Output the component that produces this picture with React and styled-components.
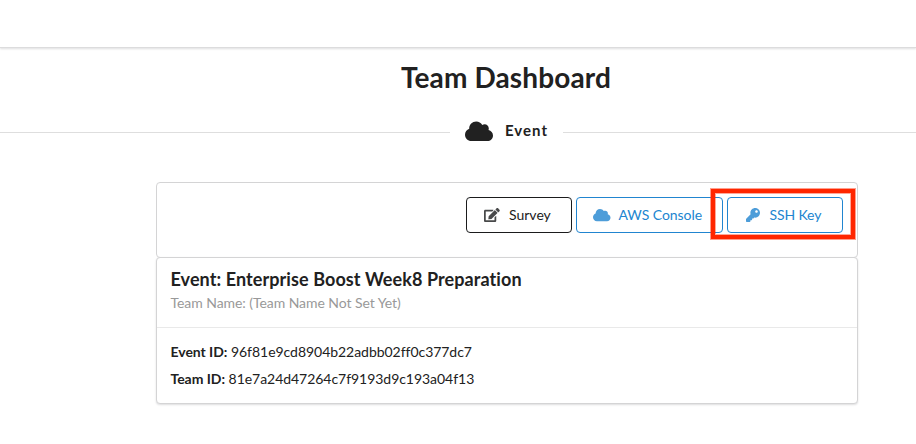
import React from 'react';
import styled, { createGlobalStyle } from 'styled-components';
import { FaCloud, FaEdit, FaKey } from 'react-icons/fa';

const GlobalStyle = createGlobalStyle`
  * { box-sizing: border-box; }
  body {
    margin: 0;
    background: #fff;
    color: #212121;
    font: 14px/20px Lato, sans-serif;
    font-variant-ligatures: none;
    overflow: hidden;
  }
`;

const Page = styled.div`
  display: flex;
  flex-direction: column;
  width: 916px;
  height: 444px;
`;

const TopBar = styled.header`
  height: 48px;
  border-bottom: 1px solid #dcdcdd;
  box-shadow: 0 1px 2px rgba(34, 36, 38, 0.15);
`;

const Title = styled.h1`
  margin: 11px 0 0;
  padding-left: 96px;
  height: 36px;
  font-size: 28px;
  line-height: 36px;
  font-weight: 700;
  letter-spacing: 0.14px;
  text-align: center;
`;

const Divider = styled.div`
  display: grid;
  grid-template-columns: 450px 113px 1fr;
  align-items: center;
  margin-top: 22px;
  height: 31px;
`;

const Rule = styled.span`
  height: 1px;
  background: #dedede;
`;

const DividerLabel = styled.h4`
  display: flex;
  align-items: center;
  gap: 12px;
  margin: -2px 0 0;
  padding-left: 15px;
  font-size: 15px;
  line-height: 20px;
  font-weight: 700;
  letter-spacing: 1px;

  svg { width: 28px; height: 22.4px; flex: none; }
  span { margin-top: -2px; }
`;

const Cards = styled.main`
  width: 702px;
  margin: 34px 0 0 156px;
`;

const Card = styled.section`
  height: ${(p) => p.$height}px;
  margin-top: ${(p) => (p.$joined ? -1 : 0)}px;
  background: #fff;
  border: 1px solid #d4d4d5;
  border-radius: 4px;
  box-shadow: ${(p) => (p.$joined ? '0 1px 2px rgba(34, 36, 38, 0.15)' : 'none')};
`;

const Actions = styled.div`
  display: flex;
  justify-content: flex-end;
  gap: 4px;
  padding: 14px 14px 0 0;
`;

const Button = styled.button`
  display: flex;
  align-items: center;
  width: ${(p) => p.$width}px;
  height: 36px;
  padding: 0 0 0 16px;
  background: transparent;
  border: 1px solid ${(p) => p.$color};
  border-radius: 4px;
  color: ${(p) => p.$color};
  font: 14px/20px Lato, sans-serif;
  letter-spacing: ${(p) => p.$tracking || 0}px;
  white-space: nowrap;
`;

const ButtonIcon = styled.span`
  display: flex;
  justify-content: center;
  width: 18px;
  margin-right: ${(p) => p.$gap}px;
  opacity: 0.8;

  svg { width: ${(p) => p.$width}px; height: 14px; flex: none; }
`;

const Target = styled.div`
  position: relative;
`;

const Highlight = styled.div`
  position: absolute;
  left: -16px;
  top: -8px;
  width: 144px;
  height: 50px;
  border: 4px solid #ff2600;
  box-shadow: 0 0 0 1px rgba(255, 38, 0, 0.45), inset 0 0 0 1px rgba(255, 38, 0, 0.4);
  pointer-events: none;
`;

const CardHead = styled.div`
  height: 70px;
  padding: 9px 13.5px 0;
  border-bottom: 1px solid #e9e9e9;
`;

const CardTitle = styled.h2`
  margin: 0;
  font-size: 18px;
  line-height: 25px;
  font-weight: 700;
  letter-spacing: 0.085px;
`;

const Meta = styled.div`
  margin-top: 1px;
  color: #999;
  letter-spacing: -0.06px;
`;

const Details = styled.div`
  padding: 14px 13.5px 0;
  letter-spacing: -0.04px;
`;

const Detail = styled.div`
  height: 27px;
  line-height: 20px;
`;

export default function App() {
  return (
    <Page>
      <GlobalStyle />
      <TopBar />
      <Title>Team Dashboard</Title>
      <Divider>
        <Rule />
        <DividerLabel><FaCloud /><span>Event</span></DividerLabel>
        <Rule />
      </Divider>
      <Cards>
        <Card $height={76}>
          <Actions>
            <Button $width={106} $color="#1b1c1d">
              <ButtonIcon $width={15.75} $gap={8}><FaEdit /></ButtonIcon>Survey
            </Button>
            <Button $width={147} $color="#2185d0" $tracking={-0.06}>
              <ButtonIcon $width={17.5} $gap={7.5}><FaCloud /></ButtonIcon>AWS Console
            </Button>
            <Target>
              <Button $width={116} $color="#2185d0" $tracking={-0.12}>
                <ButtonIcon $width={14} $gap={7.5}><FaKey /></ButtonIcon>SSH Key
              </Button>
              <Highlight />
            </Target>
          </Actions>
        </Card>
        <Card $height={147} $joined>
          <CardHead>
            <CardTitle>Event: Enterprise Boost Week8 Preparation</CardTitle>
            <Meta>Team Name: (Team Name Not Set Yet)</Meta>
          </CardHead>
          <Details>
            <Detail><b>Event ID:</b> 96f81e9cd8904b22adbb02ff0c377dc7</Detail>
            <Detail><b>Team ID:</b> 81e7a24d47264c7f9193d9c193a04f13</Detail>
          </Details>
        </Card>
      </Cards>
    </Page>
  );
}
